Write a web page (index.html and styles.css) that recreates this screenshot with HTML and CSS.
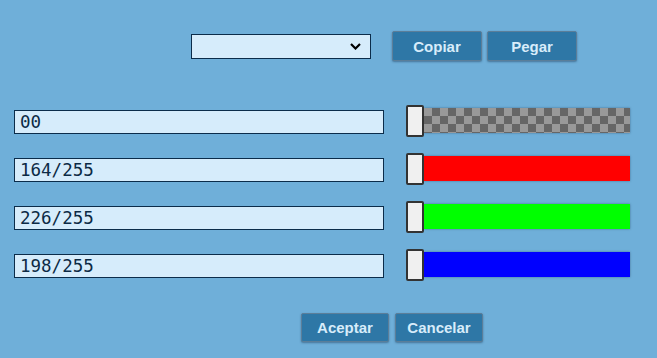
FILE: index.html
```html
<!DOCTYPE html>
<html>
<head>
<meta charset="utf-8">
<link rel="stylesheet" href="styles.css">
</head>
<body>
<div class="page">
  <div class="top">
    <div class="select">
      <svg class="chev" width="11" height="7" viewBox="0 0 11 7"><path d="M1 1 L5.5 5.5 L10 1" fill="none" stroke="#000" stroke-width="2.2"/></svg>
    </div>
    <div class="btns">
      <button class="btn wide">Copiar</button>
      <button class="btn wide">Pegar</button>
    </div>
  </div>
  <div class="rows">
    <div class="row">
      <div class="field">00</div>
      <div class="slider"><div class="thumb"></div><div class="track checker"></div></div>
    </div>
    <div class="row">
      <div class="field">164/255</div>
      <div class="slider"><div class="thumb"></div><div class="track red"></div></div>
    </div>
    <div class="row">
      <div class="field">226/255</div>
      <div class="slider"><div class="thumb"></div><div class="track green"></div></div>
    </div>
    <div class="row">
      <div class="field">198/255</div>
      <div class="slider"><div class="thumb"></div><div class="track blue"></div></div>
    </div>
  </div>
  <div class="bottom">
    <button class="btn">Aceptar</button>
    <button class="btn">Cancelar</button>
  </div>
</div>
</body>
</html>
```

FILE: styles.css
```css
html, body {
  margin: 0;
  padding: 0;
  background: #6fafd9;
  width: 657px;
  height: 358px;
  overflow: hidden;
}
.page {
  padding-top: 31px;
  display: flex;
  flex-direction: column;
}
.top {
  display: flex;
  align-items: center;
  padding-left: 191px;
  height: 30px;
}
.select {
  box-sizing: border-box;
  width: 180px;
  height: 25px;
  background: #d6ecfb;
  border: 1px solid #0b2c4a;
  display: flex;
  align-items: center;
  justify-content: flex-end;
  padding-right: 9px;
}
.chev { display: block; margin-top: 1px; }
.btns {
  display: flex;
  gap: 5px;
  margin-left: 21px;
}
.btn {
  box-sizing: border-box;
  width: 88px;
  height: 29px;
  background: #2e77a6;
  border: 1px solid #5b7e99;
  border-radius: 2px;
  box-shadow: 0 1px 2px rgba(30, 60, 90, 0.5);
  color: #d7ecfa;
  font-family: "Liberation Sans", Arial, sans-serif;
  font-weight: bold;
  font-size: 15px;
  padding: 0;
}
.btn.wide { width: 90px; height: 30px; }
.rows {
  margin-top: 37px;
  display: flex;
  flex-direction: column;
}
.row {
  height: 48px;
  display: flex;
  align-items: center;
  padding-left: 14px;
}
.field {
  box-sizing: border-box;
  width: 370px;
  height: 24px;
  background: #d6ecfb;
  border: 1px solid #0b2c4a;
  font-family: "DejaVu Sans Mono", monospace;
  font-size: 17.5px;
  line-height: 22px;
  color: #0c2a45;
  padding-left: 5px;
}
.slider {
  margin-left: 22px;
  display: flex;
  align-items: center;
  margin-top: -3px;
}
.thumb {
  box-sizing: border-box;
  width: 18px;
  height: 32px;
  background: #f0f0f0;
  border: 2px solid #333;
  border-radius: 2px;
  position: relative;
  z-index: 1;
}
.track {
  width: 206px;
  height: 25px;
  box-shadow: 0 0 2px rgba(40, 70, 100, 0.6);
}
.checker {
  background-color: #999;
  background-image:
    linear-gradient(45deg, #666 25%, transparent 25%, transparent 75%, #666 75%),
    linear-gradient(45deg, #666 25%, transparent 25%, transparent 75%, #666 75%);
  background-size: 16px 16px;
  background-position: 0 0, 8px 8px;
}
.red { background: #ff0000; }
.green { background: #00ff00; }
.blue { background: #0000ff; }
.bottom {
  margin-top: 23px;
  display: flex;
  gap: 6px;
  padding-left: 301px;
}
```
